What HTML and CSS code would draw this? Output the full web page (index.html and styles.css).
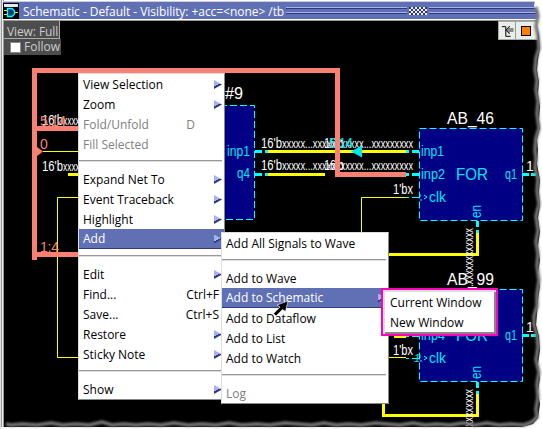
FILE: index.html
```
<!DOCTYPE html>
<html lang="en">
<head>
<meta charset="utf-8">
<title>Schematic</title>
<link rel="stylesheet" href="styles.css">
</head>
<body>
<main class="window">
  <header class="titlebar">
    <svg class="app-icon" width="16" height="16" viewBox="0 0 16 16"><path fill="#000" d="M0 0h16v16H0z"/><path fill="#e8e8e8" d="M1 1h14v3H1z"/><path stroke="#ff0" d="M1 7.500h4M1 11.500h4M12 9.500h3"/><path d="M4.500 5.500H9l2.500 2.500v3L9 13.500H4.500z" fill="#004080" stroke="#0ff" stroke-width="1.3"/></svg>
    <h1 class="title">Schematic - Default - Visibility: +acc=&lt;none&gt; /tb</h1>
    <span class="grooves"></span><span class="grip"></span><span class="grooves end"></span>
  </header>
  <section class="canvas">
    <svg class="schematic" width="538" height="408" viewBox="4 21 538 408">
      <defs>
        <g id="block">
          <path class="box" d="M419.5 128.5h103v92h-103z"/>
          <path class="pin" d="M406 151.500h3m3 0h7M406 174.500h3m3 0h7M522 174.500h7m2 0h5M477.500 221v6m0 3v3"/>
          <path class="fine pin-fine" d="M406 197.500h3m3 0h7M420 194v3m0 3h2m2-5 3 2-3 2"/>
          <text class="cyan big" x="456" y="180" textLength="32" lengthAdjust="spacingAndGlyphs">FOR</text>
          <text class="cyan" x="505" y="179" textLength="12" lengthAdjust="spacingAndGlyphs">q1</text>
          <text class="cyan" x="429" y="202" textLength="17" lengthAdjust="spacingAndGlyphs">clk</text>
          <text class="cyan" transform="translate(481 218) rotate(-90)" textLength="13" lengthAdjust="spacingAndGlyphs">en</text>
          <text class="white" x="393" y="194" textLength="20" lengthAdjust="spacingAndGlyphs">1'bx</text>
          <text class="white" x="526" y="171">1</text>
          <text class="white tiny" transform="translate(473 292) rotate(-90)" textLength="64" lengthAdjust="spacingAndGlyphs">...xxxxxxxxxxxx</text>
        </g>
      </defs>
      <path class="wire" d="M268 151.500h138M268 174.500h57M68 174.500h10M477.500 233v21.500H383M477.500 394v21.500h-94V400M394 336.500h12"/>
      <path class="fine" d="M43 151.500h35M78 197.500H57.500v160H78M406 197.500h-44.500v58M389 357.500h17"/>
      <path class="box" d="M160 105.500h94.500v114H160z"/>
      <path class="pin" d="M255 151.500h7m3 0h3M255 174.500h7m3 0h3"/>
      <text class="white big" x="225" y="99" textLength="18" lengthAdjust="spacingAndGlyphs">#9</text>
      <text class="cyan" x="227" y="156" textLength="23" lengthAdjust="spacingAndGlyphs">inp1</text>
      <text class="cyan" x="237" y="178" textLength="13" lengthAdjust="spacingAndGlyphs">q4</text>
      <text class="white" x="42" y="125" textLength="21" lengthAdjust="spacingAndGlyphs">16'b</text><text class="white tiny" x="63" y="125" textLength="21" lengthAdjust="spacingAndGlyphs">xxxxx</text>
      <text class="white" x="42" y="171" textLength="21" lengthAdjust="spacingAndGlyphs">16'b</text><text class="white tiny" x="63" y="171" textLength="21" lengthAdjust="spacingAndGlyphs">xxxxx</text>
      <text class="white" x="261" y="148" textLength="21" lengthAdjust="spacingAndGlyphs">16'b</text>
      <text class="white tiny" x="282" y="148" textLength="131" lengthAdjust="spacingAndGlyphs">xxxxx...xxxxxxxxxxx...xxxxxxxxx</text>
      <text class="white" x="261" y="170" textLength="21" lengthAdjust="spacingAndGlyphs">16'b</text>
      <text class="white tiny" x="282" y="170" textLength="131" lengthAdjust="spacingAndGlyphs">xxxxx...xxxxxxxxxxx...xxxxxxxxx</text>
      <text class="white" x="324" y="148" textLength="20" lengthAdjust="spacingAndGlyphs">16'b</text>
      <text class="white" x="324" y="170" textLength="20" lengthAdjust="spacingAndGlyphs">16'b</text>
      <text class="cyan" x="329" y="148" textLength="24">5:14</text>
      <path class="cyan" d="M351 151.500l11-6v12z"/>
      <use href="#block"/>
      <use href="#block" y="161"/>
      <text class="white big" x="447" y="124" textLength="47" lengthAdjust="spacingAndGlyphs">AB_46</text>
      <text class="white big" x="447" y="285" textLength="47" lengthAdjust="spacingAndGlyphs">AB_99</text>
      <text class="cyan" x="421" y="156" textLength="23" lengthAdjust="spacingAndGlyphs">inp1</text>
      <text class="cyan" x="421" y="179" textLength="24" lengthAdjust="spacingAndGlyphs">inp2</text>
      <text class="cyan" x="421" y="340" textLength="24" lengthAdjust="spacingAndGlyphs">inp4</text>
      <text class="cyan slant" x="414" y="362">1</text>
      <path class="bus" d="M34.500 260V70.500h303v104H406M35 128.500h43M35 254.500h43"/>
      <path class="salmon" d="M37 147l6 4.500-6 4.500z"/>
      <text class="salmon" x="40" y="126" textLength="26">5:14</text>
      <text class="salmon" x="40" y="149">0</text>
      <text class="salmon" x="40" y="252" textLength="19">1:4</text>
    </svg>
    <div class="view-panel">
      <div class="view-name">View: Full</div>
      <label class="follow"><span class="check"></span>Follow</label>
    </div>
    <div class="tools">
      <svg width="16" height="18" viewBox="0 0 16 18"><path d="M3 4.500h4v10h5" fill="none" stroke="#000"/><path d="M11 4L7 8l4 4v-2h4V6h-4z" fill="#888"/><path d="M11 4L7 8l4 4" fill="none" stroke="#000"/></svg>
      <span class="stop"></span>
    </div>
  </section>

  <nav class="menu context">
    <div class="item sub">View Selection</div>
    <div class="item sub">Zoom</div>
    <div class="item off">Fold/Unfold<kbd class="key letter">D</kbd></div>
    <div class="item off">Fill Selected</div>
    <hr class="rule">
    <div class="item sub">Expand Net To</div>
    <div class="item sub">Event Traceback</div>
    <div class="item sub">Highlight</div>
    <div class="item sub on">Add</div>
    <hr class="rule">
    <div class="item sub">Edit</div>
    <div class="item">Find...<kbd class="key">Ctrl+F</kbd></div>
    <div class="item">Save...<kbd class="key">Ctrl+S</kbd></div>
    <div class="item sub">Restore</div>
    <div class="item sub">Sticky Note</div>
    <hr class="rule">
    <div class="item sub">Show</div>
  </nav>
  <nav class="menu add">
    <div class="item">Add All Signals to Wave</div>
    <hr class="rule">
    <div class="item">Add to Wave</div>
    <div class="item sub on">Add to Schematic</div>
    <div class="item">Add to Dataflow</div>
    <div class="item">Add to List</div>
    <div class="item">Add to Watch</div>
    <hr class="rule">
    <div class="item off">Log</div>
  </nav>
  <nav class="menu target">
    <div class="item">Current Window</div>
    <div class="item">New Window</div>
  </nav>
  <svg class="cursor" width="18" height="18" viewBox="0 0 18 18"><path d="M16 1L13.500 11.500l-3-2-6.500 6.500-2.500-2.500 6.500-6.500-3-2z" fill="#000" stroke="#fff" stroke-width=".6"/></svg>
  <svg class="torn" width="542" height="429" viewBox="0 0 542 429">
    <defs><filter id="soft" x="-5%" y="-5%" width="110%" height="110%"><feGaussianBlur stdDeviation=".8"/></filter></defs>
    <path class="paper" d="M535 0L534 6 538 12 537 24 539 36 540 48 538 60 537 70 539 82 538 94 540 106 539 120 540 128 537 140 538 150 537 164 540 180 539 192 540 206 538 218 540 232 538 246 540 260 538 274 540 286 538 300 537 314 536 325 539 336 540 350 538 364 540 378 538 392 540 404 538 418 533 424 522 427 0 427V429H542V0z"/>
    <path class="shade" filter="url(#soft)" d="M536 7L538 16 536 26 538 36 539 48 536 58 535 70 537 80 536 90 538 101 537 114 539 128 536 138 535 150 536 158 535 168 538 179 537 191 539 204 536 216 538 230 536 242 538 254 537 266 539 280 537 294 537 306 534 316 534 325 537 335 538 347 536 360 539 372 537 384 538 397 536 409 537 417 532 422 524 425 511 424 499 425 487 423 475 425 463 423 450 425 437 424 425 425 413 423 400 425 387 424 376 423 361 425 349 424 336 425 324 423 312 425 298 424 285 423 270 425 257 424 242 425 229 423 216 425 202 424 188 425 174 423 161 425 148 424 136 425 124 424 112 425 102 422 89 425 76 424 63 425 51 423 37 425 22 424 11 425 6 424"/>
  </svg>
</main>
</body>
</html>
```
FILE: styles.css
```
* { box-sizing: border-box; }
body { margin: 0; background: #fff; font: 12px/20px "Open Sans", "Noto Sans", sans-serif; }
.window { position: relative; width: 542px; height: 429px; overflow: hidden; padding: 1px 0 0 3px; border-left: 1px solid #ddd; box-shadow: inset 1px 0 #999, inset 2px 0 #eee, inset 3px 0 #999; }
.titlebar { display: flex; align-items: center; height: 20px; margin-left: -1px; padding-right: 6px; background: #6070b4; border-top: 1px solid #ccd; border-bottom: 1px solid #999; box-shadow: inset 0 -1px #fff; }
.app-icon { flex: none; margin-right: 4px; }
.title { flex: none; margin: 0; color: #fff; font-size: 12px; line-height: 17px; font-weight: 400; letter-spacing: -.05px; white-space: nowrap; width: 263px; }
.grooves { flex: 1; height: 8px; background: linear-gradient(#a5b0f5 1px, #303c78 1px 2px, transparent 2px 5px, #a5b0f5 5px 6px, #303c78 6px 7px, transparent 7px); }
.grooves.end { flex: none; width: 107px; }
.grip { width: 18px; height: 8px; margin: 0 2px; background: conic-gradient(#eee 25%, #303c78 0 50%, #eee 0 75%, #303c78 0) 0 0 / 4px 4px; }
.canvas { position: relative; height: 408px; background: #000; }
.schematic { display: block; font-family: "Liberation Sans", sans-serif; font-size: 14px; }
.white { fill: #fff; }
.cyan { fill: #00e5ee; }
.salmon { fill: #fa8072; }
.big { font-size: 16px; }
.tiny { font-size: 13px; }
.slant { font-size: 11px; font-style: italic; }
.box { fill: #000084; stroke: #0ff; stroke-dasharray: 7 3; }
.wire, .pin, .fine, .bus { fill: none; stroke: #ff0; stroke-width: 3; }
.pin { stroke: #0ff; }
.fine { stroke-width: 1; }
.pin-fine { stroke: #0ff; }
.bus { stroke: #fa8072; stroke-width: 5; }
.view-panel { position: absolute; left: 0; top: 0; color: #ccc; }
.view-name { width: 56px; height: 18px; padding-left: 3px; line-height: 22px; white-space: nowrap; overflow: hidden; background: #4d4d4d; border-right: 1px solid #aaa; border-bottom: 1px solid #aaa; letter-spacing: -.1px; }
.follow { display: flex; align-items: center; gap: 3px; width: 57px; height: 16px; padding-left: 6px; background: #4d4d4d; }
.check { width: 11px; height: 11px; background: #fff; border: 1px solid #888; }
.tools { position: absolute; left: 494px; top: 0; display: flex; width: 40px; height: 19px; background: #e8eee8; border: 1px solid #aaa; }
.stop { width: 23px; border-left: 1px solid #999; display: flex; align-items: center; padding-left: 5px; }
.stop::before { content: ""; width: 8px; height: 8px; background: #ff8000; border: 1px solid #000; }
.menu { position: absolute; background: #fff; border: 1px solid; border-color: #ddd #888 #888 #ddd; }
.context { left: 77px; top: 73px; width: 147px; height: 327px; }
.add { left: 220px; top: 232px; width: 168px; height: 172px; }
.target { left: 380px; top: 288px; width: 117px; height: 48px; padding: 2px 0 0 3px; border: 2px solid #f0b; box-shadow: inset 2px 2px #ddd, inset -2px -2px #888; }
.item { display: flex; align-items: center; height: 20px; padding: 1px 2px 0 4px; color: #000; white-space: nowrap; }
.sub::after { content: ""; width: 8px; height: 9px; margin-left: auto; background: linear-gradient(155deg, #a5b0f5 50%, #303c78 50%); clip-path: polygon(0 0, 100% 50%, 0 100%); }
.on { background: #6070b4; color: #fff; border-bottom: 1px solid #303c78; }
.off { color: #808080; }
.key { margin-left: auto; margin-right: 3px; font: inherit; }
.letter { margin-right: 27px; }
.rule { height: 2px; margin: 6px 2px 7px 0; border: 0; background: linear-gradient(#999 50%, #ddd 50%); }
.cursor { position: absolute; left: 271px; top: 300px; }
.torn { position: absolute; left: -1px; top: 0; }
.paper { fill: #fff; }
.shade { fill: none; stroke: #777; stroke-width: 3.5; }
```
